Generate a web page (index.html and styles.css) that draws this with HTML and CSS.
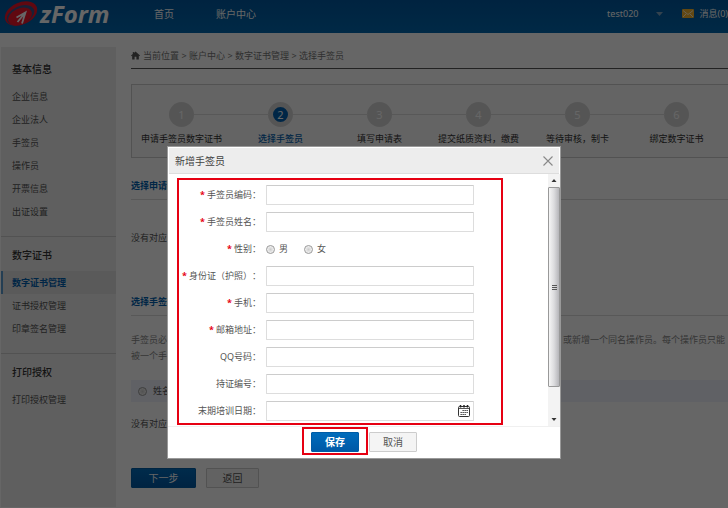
FILE: index.html
```html
<!DOCTYPE html>
<html lang="zh-CN">
<head>
<meta charset="utf-8">
<title>zForm</title>
<link rel="stylesheet" href="styles.css">
</head>
<body>
<div class="page">
  <header class="topbar">
    <a class="logo" href="#">
      <svg class="logo-mark" viewBox="0 0 34 26" aria-hidden="true">
        <ellipse cx="17" cy="12.500" rx="17" ry="11" transform="rotate(-24 17 12.500)" fill="#f0142a"/>
        <ellipse cx="16.500" cy="14" rx="14.500" ry="8.800" transform="rotate(-24 16.500 14)" fill="#3d5288"/>
        <ellipse cx="16" cy="15.500" rx="12.500" ry="8" transform="rotate(-24 16 15.500)" fill="#f0142a"/>
        <path d="M12.500 16.500L21.500 11.500L18 22.500M21 12L13.500 21" fill="none" stroke="#fff" stroke-width="1.800"/>
      </svg>
      <span class="logo-text">zForm</span>
    </a>
    <nav class="nav">
      <a href="#">首页</a>
      <a href="#">账户中心</a>
    </nav>
    <div class="account">
      <a href="#">test020</a>
      <svg class="caret" viewBox="0 0 7 4" aria-hidden="true"><path d="M0 0H7L3.500 4Z" fill="#7fa6c4"/></svg>
      <a class="messages" href="#">
        <svg class="mail" viewBox="0 0 12 9" aria-hidden="true"><rect width="12" height="9" rx="1" fill="#f5b52e"/><path d="M1 1.500L6 5.500L11 1.500M1 8L4 5M11 8L8 5" fill="none" stroke="#fff3cf"/></svg>
        消息(0)
      </a>
    </div>
  </header>

  <div class="layout">
    <aside class="sidebar">
      <section>
        <h2>基本信息</h2>
        <a href="#">企业信息</a>
        <a href="#">企业法人</a>
        <a href="#">手签员</a>
        <a href="#">操作员</a>
        <a href="#">开票信息</a>
        <a href="#">出证设置</a>
      </section>
      <section>
        <h2>数字证书</h2>
        <a class="active" href="#">数字证书管理</a>
        <a href="#">证书授权管理</a>
        <a href="#">印章签名管理</a>
      </section>
      <section>
        <h2>打印授权</h2>
        <a href="#">打印授权管理</a>
      </section>
    </aside>

    <main class="main">
      <div class="breadcrumb">
        <svg class="home" viewBox="0 0 10 9" aria-hidden="true"><path d="M5 0L10 4.500L9.500 5.200L8.700 4.600V9H6V6H4V9H1.300V4.600L.5 5.200L0 4.500L2 2.700V.5H3.200V1.600Z" fill="#555"/></svg>
        <span>当前位置</span><i>&gt;</i><a href="#">账户中心</a><i>&gt;</i><a href="#">数字证书管理</a><i>&gt;</i><span>选择手签员</span>
      </div>

      <ol class="steps">
        <li><b>1</b><span>申请手签员数字证书</span></li>
        <li class="current"><b>2</b><span>选择手签员</span></li>
        <li><b>3</b><span>填写申请表</span></li>
        <li><b>4</b><span>提交纸质资料，缴费</span></li>
        <li><b>5</b><span>等待审核，制卡</span></li>
        <li><b>6</b><span>绑定数字证书</span></li>
      </ol>

      <section class="block">
        <h3>选择申请</h3>
        <p class="empty">没有对应</p>
      </section>

      <section class="block second">
        <h3>选择手签员</h3>
        <div class="hint">
          <p><span>手签员必</span><span>，或新增一个同名操作员。每个操作员只能</span></p>
          <p><span>被一个手</span></p>
        </div>
        <label class="list-head"><input class="radio" type="radio" name="signer">姓名</label>
        <p class="none">没有对应</p>
      </section>

      <div class="actions">
        <button class="btn primary" type="button">下一步</button>
        <button class="btn plain" type="button">返回</button>
      </div>
    </main>
  </div>
</div>

<div class="overlay">
  <div class="dialog" role="dialog" aria-labelledby="dialog-title">
    <div class="dialog-head">
      <h1 id="dialog-title">新增手签员</h1>
      <button class="close" type="button" aria-label="关闭">
        <svg viewBox="0 0 10 10" aria-hidden="true"><path d="M.5 .5L9.500 9.500M9.500 .5L.5 9.500" stroke="#888" stroke-width="1.100"/></svg>
      </button>
    </div>
    <div class="dialog-body">
      <form class="form" id="signer-form">
        <div class="row"><label class="required" for="code">手签员编码：</label><input id="code" type="text"></div>
        <div class="row"><label class="required" for="name">手签员姓名：</label><input id="name" type="text"></div>
        <div class="row" role="radiogroup" aria-labelledby="sex">
          <span class="label required" id="sex">性别：</span>
          <div class="options">
            <label><input class="radio" type="radio" name="sex">男</label>
            <label><input class="radio" type="radio" name="sex">女</label>
          </div>
        </div>
        <div class="row"><label class="required" for="idno">身份证（护照）：</label><input id="idno" type="text"></div>
        <div class="row"><label class="required" for="mobile">手机：</label><input id="mobile" type="text"></div>
        <div class="row"><label class="required" for="mail">邮箱地址：</label><input id="mail" type="text"></div>
        <div class="row"><label for="qq">QQ号码：</label><input id="qq" type="text"></div>
        <div class="row"><label for="cert">持证编号：</label><input id="cert" type="text"></div>
        <div class="row">
          <label for="date">末期培训日期：</label>
          <div class="date">
            <input id="date" type="text">
            <svg class="calendar" viewBox="0 0 12 12" aria-hidden="true"><rect x=".5" y="1.500" width="11" height="10" rx="1" fill="#fff" stroke="#333"/><path d="M1 3.500H11" stroke="#555"/><path d="M2.500 0V2.500M6 0V2.500M9.500 0V2.500" stroke="#222" stroke-width="1.500"/><path d="M4.500 5.500H10M2.500 7.500H10M2.500 9.500H8" stroke="#333" stroke-dasharray="1.300 .7"/></svg>
          </div>
        </div>
      </form>
      <div class="scrollbar" aria-hidden="true">
        <svg class="arrow" viewBox="0 0 11 13"><path d="M3 8L5.500 5L8 8Z" fill="#333"/></svg>
        <div class="thumb"><i></i><i></i><i></i></div>
        <svg class="arrow" viewBox="0 0 11 13"><path d="M3 5L5.500 8L8 5Z" fill="#333"/></svg>
      </div>
    </div>
    <div class="dialog-foot">
      <div class="marked"><button class="btn primary small" type="submit" form="signer-form">保存</button></div>
      <button class="btn plain small" type="button">取消</button>
    </div>
  </div>
</div>
</body>
</html>
```
FILE: styles.css
```css
* { box-sizing: border-box; }

body {
  margin: 0;
  background: #fff;
  color: #555;
  font: 9px/16px "Noto Sans", "Noto Sans CJK SC", sans-serif;
  text-spacing-trim: space-all;
}

h1, h2, h3, p, ol { margin: 0; padding: 0; }
a { color: inherit; text-decoration: none; }
svg { display: block; flex: none; }
button, input { font: inherit; color: inherit; }

.page {
  display: flex;
  flex-direction: column;
  height: 100vh;
  overflow: hidden;
}

/* Top bar */
.topbar {
  display: flex;
  align-items: center;
  flex: none;
  height: 33px;
  padding: 0 0 6px 4px;
  background: linear-gradient(#0058a0, #0067ae);
  color: #fff;
}
.logo { display: flex; align-items: center; gap: 2px; width: 150px; }
.logo-mark { width: 34px; height: 26px; }
.logo-text { font: italic bold 24px/24px "Open Sans", sans-serif; }
.nav { display: flex; gap: 42px; flex: 1; font-size: 10px; }
.account { display: flex; align-items: center; }
.caret { width: 7px; height: 4px; margin: 0 19px 0 18px; }
.messages { display: flex; align-items: center; gap: 5px; white-space: nowrap; }
.mail { width: 12px; height: 9px; }

/* Sidebar */
.layout { display: flex; flex: 1; gap: 15px; padding: 14px 0 1px 1px; }
.sidebar {
  flex: none;
  width: 115px;
  padding-top: 4px;
  background: #eee;
}
.sidebar section { padding-bottom: 13px; border-bottom: 1px solid #ccc; }
.sidebar section:last-child { border-bottom: 0; }
.sidebar h2 {
  height: 34px;
  padding: 3px 0 0 11px;
  color: #333;
  font-size: 10px;
  font-weight: 500;
  line-height: 31px;
}
.sidebar a { display: block; padding-left: 11px; line-height: 23px; }
.sidebar .active {
  padding-left: 9px;
  border-left: 2px solid #5a9bd0;
  background: #e0e0e0;
  color: #005fae;
  font-weight: bold;
}

/* Main column */
.main { flex: 1; min-width: 0; }
.breadcrumb {
  display: flex;
  align-items: center;
  height: 22px;
  padding-bottom: 4px;
  border-bottom: 1px solid #555;
  color: #777;
}
.breadcrumb i { width: 10px; font-style: normal; text-align: center; }
.home { width: 9px; height: 9px; margin-right: 3px; }

.steps {
  display: grid;
  grid-template-columns: repeat(6, 1fr);
  height: 74px;
  margin-top: 15px;
  padding: 17px 2px 0 0;
  border: solid #ccc;
  border-width: 1px 0 1px 1px;
  background: #fafafa;
  list-style: none;
}
.steps li {
  display: flex;
  position: relative;
  flex-direction: column;
  align-items: center;
  gap: 4px;
  color: #333;
  white-space: nowrap;
}
.steps li + li::before {
  content: "";
  position: absolute;
  top: 12px;
  right: calc(50% + 12px);
  width: calc(100% - 24px);
  height: 1px;
  background: #ddd;
}
.steps b {
  width: 25px;
  height: 25px;
  border-radius: 50%;
  background: #d5d5d5;
  color: #fff;
  font-size: 11px;
  font-weight: normal;
  line-height: 25px;
  text-align: center;
}
.steps .current { color: #005fae; font-weight: 500; }
.steps .current b {
  border: 5px solid #d5d5d5;
  background: #0060b0;
  color: #fff;
  line-height: 15px;
}

.block { padding-top: 20px; }
.block h3 {
  height: 22px;
  border-bottom: 1px solid #ddd;
  color: #005fae;
  font-size: 9px;
}
.empty { padding-top: 30px; }
.second { padding-top: 48px; }
.hint { padding-top: 16px; color: #888; }
.hint p { display: flex; justify-content: space-between; padding-right: 3px; white-space: nowrap; }
.list-head {
  display: flex;
  align-items: center;
  gap: 6px;
  height: 22px;
  margin: 16px 0 14px;
  padding-left: 7px;
  background: #eff2fc;
}
.actions { display: flex; gap: 10px; padding-top: 36px; }

/* Controls */
.btn {
  height: 20px;
  padding: 0;
  border: 1px solid #ccc;
  border-radius: 1px;
  font-size: 10px;
  line-height: 18px;
}
.primary {
  width: 65px;
  border-color: #005ca6;
  background: linear-gradient(#006cbc, #0059a6);
  color: #fff;
}
.plain { width: 53px; background: #f4f4f4; }
.small { width: 48px; }
.primary.small { font-weight: bold; }

.radio {
  appearance: none;
  flex: none;
  width: 9px;
  height: 9px;
  margin: 0;
  border: 1px solid #999;
  border-radius: 50%;
  background: radial-gradient(#ccc, #f2f2f2 70%);
}

/* Dialog */
.overlay {
  display: flex;
  position: fixed;
  inset: 0;
  align-items: flex-start;
  justify-content: center;
  padding-top: 146px;
  background: rgba(0, 0, 0, .6);
}
.dialog { width: 394px; border: 1px solid #999; background: #fff; }
.dialog-head {
  display: flex;
  align-items: center;
  justify-content: space-between;
  height: 26px;
  margin: 1px 1px 0;
  padding: 0 6px;
  border-bottom: 1px solid #ddd;
  background: #ededed;
  color: #444;
}
.dialog-head h1 { font-size: 10px; font-weight: normal; }
.close { padding: 0; border: 0; background: none; }
.close svg { width: 10px; height: 10px; }

.dialog-body { display: flex; justify-content: space-between; border-bottom: 1px solid #f0f0f0; }
.form {
  display: flex;
  flex-direction: column;
  gap: 7px;
  flex: 1;
  margin: 4px 45px 1px 9px;
  padding: 5px 27px 2px 0;
  border: 2px solid #e60012;
}
.row { display: grid; grid-template-columns: 82px 1fr; gap: 5px; align-items: center; height: 20px; }
.row > label, .label { text-align: right; white-space: nowrap; }
.required::before { content: "*"; margin-right: 2px; color: #e60012; font-weight: bold; }
.form input[type="text"] {
  width: 100%;
  height: 20px;
  padding: 0 4px;
  border: 1px solid #ddd;
  border-top-color: #ccc;
  border-radius: 1px;
  background: #fff;
}
.options { display: flex; gap: 16px; }
.options label { display: flex; align-items: center; gap: 4px; }
.date { position: relative; }
.calendar { position: absolute; top: 4px; right: 4px; width: 12px; height: 12px; }

.scrollbar { display: flex; flex-direction: column; width: 12px; background: #f3f3f3; }
.arrow { width: 12px; height: 13px; }
.thumb {
  display: flex;
  flex: 1;
  flex-direction: column;
  align-items: center;
  justify-content: center;
  gap: 1px;
  margin-bottom: 26px;
  border: 1px solid #999;
  border-radius: 1px;
  background: linear-gradient(90deg, #f5f5f5, #dcdcde 50%, #b5b5b9);
}
.thumb i { width: 5px; height: 1px; background: #555; }

.dialog-foot {
  display: flex;
  align-items: baseline;
  justify-content: center;
  gap: 1px;
  padding: 0 9px 3px 0;
}
.marked { display: flex; padding: 3px 7px 1px; border: 2px solid #e60012; }
```
